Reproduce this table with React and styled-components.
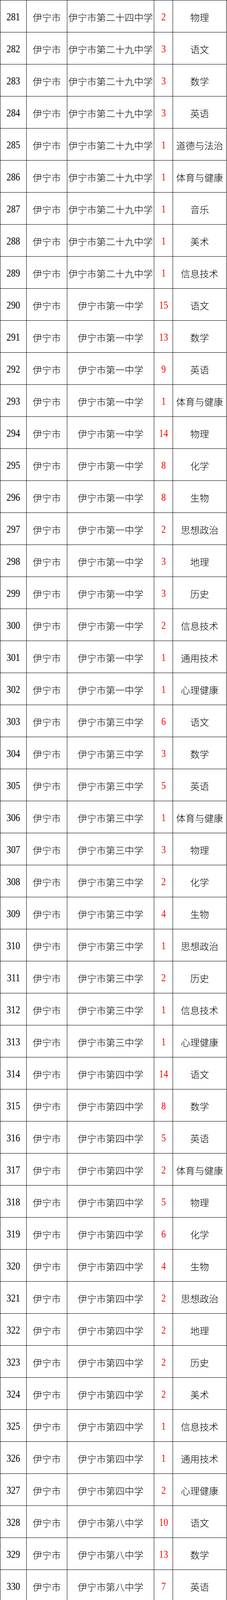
import React from "react";
import styled, { createGlobalStyle } from "styled-components";

const GlobalStyle = createGlobalStyle`
  html, body {
    margin: 0;
    padding: 0;
    background: #fff;
  }
`;

const Table = styled.div`
  width: 579px;
  border-top: 1px solid #000;
  border-left: 1px solid #000;
  font-family: "Noto Sans CJK SC", "Liberation Serif", sans-serif;
  color: #000;
`;

const Row = styled.div`
  display: grid;
  grid-template-columns: 67px 104px 222px 48px 137px;
  height: 82px;
`;

const Cell = styled.div`
  box-sizing: border-box;
  border-right: 1px solid #000;
  border-bottom: 1px solid #000;
  display: flex;
  align-items: center;
  justify-content: center;
  font-size: 24px;
  font-weight: 300;
  white-space: nowrap;
  padding-top: 3px;
  color: ${(p) => (p.$red ? "#ff0000" : "#000")};
`;

const Num = styled.span`
  display: inline-block;
  font-family: "Liberation Serif", serif;
  font-size: 28px;
  transform: scaleX(0.82);
`;

const rows = [
  ["伊宁市第二十四中学", 2, "物理"],
  ["伊宁市第二十九中学", 3, "语文"],
  ["伊宁市第二十九中学", 3, "数学"],
  ["伊宁市第二十九中学", 3, "英语"],
  ["伊宁市第二十九中学", 1, "道德与法治"],
  ["伊宁市第二十九中学", 1, "体育与健康"],
  ["伊宁市第二十九中学", 1, "音乐"],
  ["伊宁市第二十九中学", 1, "美术"],
  ["伊宁市第二十九中学", 1, "信息技术"],
  ["伊宁市第一中学", 15, "语文"],
  ["伊宁市第一中学", 13, "数学"],
  ["伊宁市第一中学", 9, "英语"],
  ["伊宁市第一中学", 1, "体育与健康"],
  ["伊宁市第一中学", 14, "物理"],
  ["伊宁市第一中学", 8, "化学"],
  ["伊宁市第一中学", 8, "生物"],
  ["伊宁市第一中学", 2, "思想政治"],
  ["伊宁市第一中学", 3, "地理"],
  ["伊宁市第一中学", 3, "历史"],
  ["伊宁市第一中学", 2, "信息技术"],
  ["伊宁市第一中学", 1, "通用技术"],
  ["伊宁市第一中学", 1, "心理健康"],
  ["伊宁市第三中学", 6, "语文"],
  ["伊宁市第三中学", 3, "数学"],
  ["伊宁市第三中学", 5, "英语"],
  ["伊宁市第三中学", 1, "体育与健康"],
  ["伊宁市第三中学", 3, "物理"],
  ["伊宁市第三中学", 2, "化学"],
  ["伊宁市第三中学", 4, "生物"],
  ["伊宁市第三中学", 1, "思想政治"],
  ["伊宁市第三中学", 2, "历史"],
  ["伊宁市第三中学", 1, "信息技术"],
  ["伊宁市第三中学", 1, "心理健康"],
  ["伊宁市第四中学", 14, "语文"],
  ["伊宁市第四中学", 8, "数学"],
  ["伊宁市第四中学", 5, "英语"],
  ["伊宁市第四中学", 2, "体育与健康"],
  ["伊宁市第四中学", 5, "物理"],
  ["伊宁市第四中学", 6, "化学"],
  ["伊宁市第四中学", 4, "生物"],
  ["伊宁市第四中学", 2, "思想政治"],
  ["伊宁市第四中学", 2, "地理"],
  ["伊宁市第四中学", 2, "历史"],
  ["伊宁市第四中学", 2, "美术"],
  ["伊宁市第四中学", 1, "信息技术"],
  ["伊宁市第四中学", 1, "通用技术"],
  ["伊宁市第四中学", 2, "心理健康"],
  ["伊宁市第八中学", 10, "语文"],
  ["伊宁市第八中学", 13, "数学"],
  ["伊宁市第八中学", 7, "英语"],
  ["伊宁市第八中学", 2, "体育与健康"],
  ["伊宁市第八中学", 5, "物理"],
  ["伊宁市第八中学", 3, "化学"],
  ["伊宁市第八中学", 4, "生物"],
  ["伊宁市第八中学", 4, "思想政治"],
];

export default function App() {
  return (
    <>
      <GlobalStyle />
      <Table>
        {rows.map(([school, count, subject], i) => (
          <Row key={i}>
            <Cell>
              <Num>{281 + i}</Num>
            </Cell>
            <Cell>伊宁市</Cell>
            <Cell>{school}</Cell>
            <Cell $red>
              <Num>{count}</Num>
            </Cell>
            <Cell>{subject}</Cell>
          </Row>
        ))}
      </Table>
    </>
  );
}
